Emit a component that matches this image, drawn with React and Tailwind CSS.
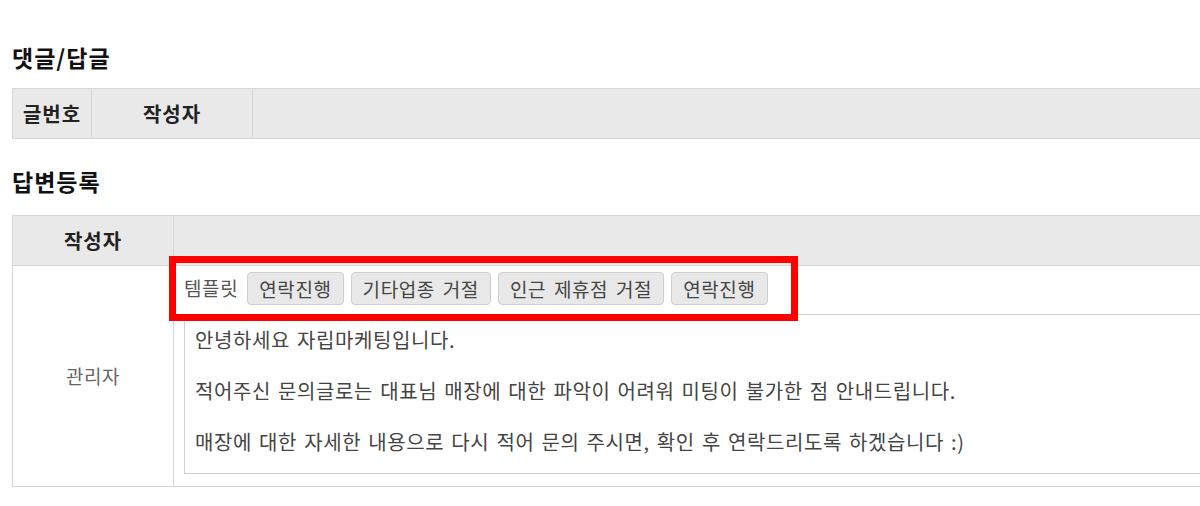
export default function App() {
  const font = { fontFamily: '"Noto Sans CJK KR", "Noto Sans", sans-serif' };
  const buttons = ["연락진행", "기타업종 거절", "인근 제휴점 거절", "연락진행"];
  return (
    <div className="w-[1200px] h-[506px] overflow-hidden bg-white pl-[12px] pt-[40px]" style={font}>
      <h2 className="h-[34px] leading-[34px] text-[23px] tracking-[1px] font-bold text-[#111]">댓글/답글</h2>
      <div className="mt-[14px] w-[1250px] grid grid-cols-[79px_161px_1fr] border-t border-b border-l border-[#d6d6d6] bg-[#e9e9e9] h-[51px]">
        <div className="border-r border-[#d6d6d6] flex items-center justify-center text-[20px] tracking-[1px] font-bold text-[#222]">글번호</div>
        <div className="border-r border-[#d6d6d6] flex items-center justify-center text-[20px] tracking-[1px] font-bold text-[#222]">작성자</div>
        <div></div>
      </div>
      <h2 className="mt-[25px] h-[34px] leading-[34px] text-[23px] tracking-[1px] font-bold text-[#111]">답변등록</h2>
      <div className="relative mt-[17px] w-[1250px] grid grid-cols-[161px_1fr] border-t border-b border-l border-[#d6d6d6]">
        <div className="h-[50px] bg-[#e9e9e9] border-r border-b border-[#d6d6d6] flex items-center justify-center text-[20px] tracking-[1px] font-bold text-[#222]">작성자</div>
        <div className="h-[50px] bg-[#e9e9e9] border-b border-[#d6d6d6]"></div>
        <div className="border-r border-[#d6d6d6] flex items-center justify-center text-[19px] tracking-[0.6px] text-[#666]">관리자</div>
        <div className="pl-[10px] pt-[6px] pb-[12px]">
          <div className="flex items-center gap-[7px] h-[33px]">
            <span className="text-[19px] tracking-[0.6px] text-[#555] mr-[2px]">템플릿</span>
            {buttons.map((b, i) => (
              <button
                key={i}
                className="h-[33px] px-[11px] border border-[#cfcfcf] rounded-[4px] bg-[#e8e8e8] text-[19px] tracking-[0.6px] [word-spacing:3px] text-[#444] leading-none"
                style={font}
              >
                {b}
              </button>
            ))}
          </div>
          <div className="mt-[9px] h-[160px] border border-[#d0d0d0] px-[10px] pt-[12px] text-[20px] tracking-[0.6px] [word-spacing:2px] leading-[25.5px] text-[#444]">
            <p>안녕하세요 자립마케팅입니다.</p>
            <p className="mt-[25.5px]">적어주신 문의글로는 대표님 매장에 대한 파악이 어려워 미팅이 불가한 점 안내드립니다.</p>
            <p className="mt-[25.5px]">매장에 대한 자세한 내용으로 다시 적어 문의 주시면, 확인 후 연락드리도록 하겠습니다 :)</p>
          </div>
        </div>
        <div className="absolute left-[156px] top-[40px] w-[629px] h-[65px] border-[7px] border-[#ff0000] pointer-events-none"></div>
      </div>
    </div>
  );
}
